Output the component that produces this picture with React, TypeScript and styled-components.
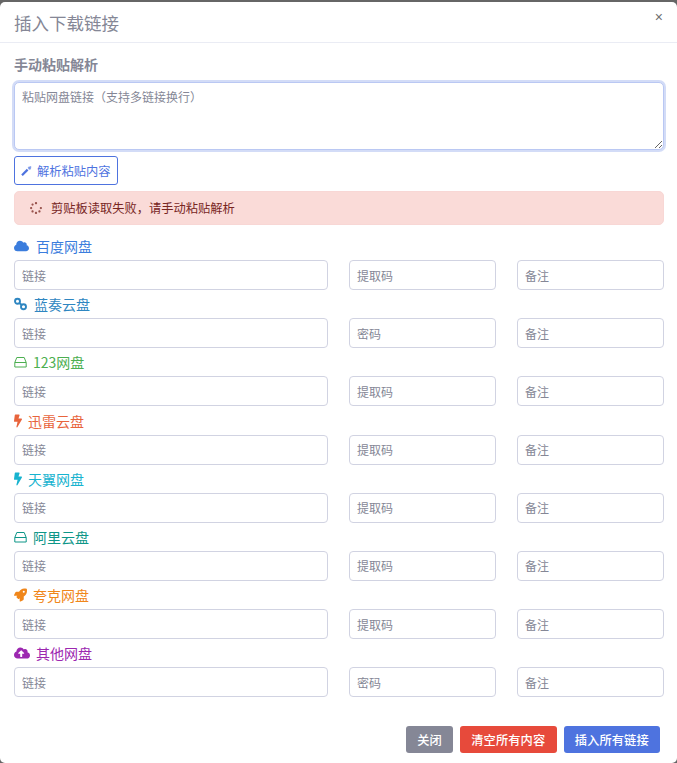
import React from "react";
import styled, { createGlobalStyle } from "styled-components";
import {
  FaBolt,
  FaCloud,
  FaCloudUploadAlt,
  FaRocket,
  FaSpinner,
} from "react-icons/fa";

const FONT = `"Noto Sans CJK SC", "Noto Sans", "Liberation Sans", sans-serif`;

const GlobalStyle = createGlobalStyle`
  html, body {
    margin: 0;
    padding: 0;
    background: #666;
  }
  * {
    box-sizing: border-box;
  }
`;

const Modal = styled.div`
  margin-top: 2px;
  width: 677px;
  height: 761px;
  background: #fff;
  border-radius: 5px;
  font-family: ${FONT};
  display: flex;
  flex-direction: column;
`;

const Header = styled.div`
  height: 41px;
  padding: 0 14px;
  border-bottom: 1px solid #eaecf4;
  display: flex;
  align-items: center;
  justify-content: space-between;
`;

const Title = styled.h5`
  margin: 0;
  font-size: 17.5px;
  font-weight: 400;
  color: #858796;
  line-height: 41px;
`;

const CloseButton = styled.button`
  border: 0;
  background: none;
  padding: 0;
  margin: -10px 0 0 0;
  font-family: "Liberation Sans", sans-serif;
  font-size: 14px;
  font-weight: 400;
  line-height: 1;
  color: #6f6f6f;
`;

const Body = styled.div`
  padding: 11px 13px 0 14px;
  flex: 1;
`;

const SectionLabel = styled.div`
  font-size: 14px;
  line-height: 20px;
  font-weight: 700;
  color: #858796;
  margin-bottom: 8px;
`;

const PasteArea = styled.textarea`
  display: block;
  width: 100%;
  height: 68px;
  margin: 0;
  padding: 5px 7px;
  border: 1px solid #bac8f3;
  border-radius: 5px;
  box-shadow: 0 0 0 2px rgba(78, 115, 223, 0.25);
  outline: none;
  resize: vertical;
  font-family: ${FONT};
  font-size: 12px;
  line-height: 18px;
  color: #6e707e;

  &::placeholder {
    color: #858796;
    opacity: 1;
  }
`;

const ParseButton = styled.button`
  display: flex;
  align-items: center;
  gap: 5px;
  height: 29px;
  width: 104px;
  margin: 6px 0;
  padding: 0 6px;
  border: 1px solid #4e73df;
  border-radius: 3px;
  background: #fff;
  color: #4e73df;
  font-family: ${FONT};
  font-size: 12.25px;
  white-space: nowrap;
`;

const Alert = styled.div`
  height: 34px;
  border-radius: 5px;
  border: 1px solid #f8d7d5;
  background: #fadbd8;
  color: #78261f;
  font-size: 12.25px;
  padding: 0 15px;
  display: flex;
  align-items: center;
  gap: 9px;
  margin-bottom: 11px;
`;

const Spinner = styled(FaSpinner)`
  font-size: 12px;
  opacity: 0.75;
`;

const DiskGroup = styled.div`
  height: 58.2px;
`;

const DiskLabel = styled.div<{ $color: string }>`
  height: 20px;
  display: flex;
  align-items: center;
  color: ${(props) => props.$color};
  font-size: 14px;
  line-height: 20px;
  white-space: nowrap;
`;

const IconSlot = styled.span<{ $width: number; $gap: number }>`
  display: flex;
  align-items: center;
  flex: none;
  height: 14px;
  width: ${(props) => props.$width}px;
  margin-right: ${(props) => props.$gap}px;

  svg {
    display: block;
    width: 100%;
    height: 100%;
  }
`;

const FieldRow = styled.div`
  display: grid;
  grid-template-columns: 314px 147px 147px;
  justify-content: space-between;
  margin-top: 4px;
`;

const Field = styled.input`
  height: 30px;
  width: 100%;
  padding: 0 7px;
  border: 1px solid #d1d3e2;
  border-radius: 4px;
  outline: none;
  background: #fff;
  font-family: ${FONT};
  font-size: 12px;
  color: #6e707e;

  &::placeholder {
    color: #858796;
    opacity: 1;
  }
`;

const Footer = styled.div`
  display: flex;
  justify-content: flex-end;
  gap: 7px;
  padding: 0 17px 10px 0;
`;

const FooterButton = styled.button<{ $bg: string }>`
  height: 27px;
  padding: 0 11.2px;
  border: 0;
  border-radius: 3px;
  background: ${(props) => props.$bg};
  color: #fff;
  font-family: ${FONT};
  font-size: 12.25px;
  font-weight: 500;
  letter-spacing: 0.1px;
  white-space: nowrap;
`;

const WandIcon = () => (
  <svg width="11" height="10" viewBox="0 0 11 10" fill="none" stroke="currentColor">
    <path d="M1 9.2 L6.6 3.6" strokeWidth="2.2" />
    <path d="M7.2 1.2 L10 0.6 L9.4 3.2 L7.8 3.2 Z" fill="currentColor" strokeWidth="0.6" opacity="0.75" />
  </svg>
);

const ChainIcon = () => (
  <svg viewBox="0 0 13 14" fill="none" stroke="currentColor" strokeWidth="1.9">
    <circle cx="3.5" cy="4.2" r="2.5" />
    <circle cx="9.5" cy="9.8" r="2.5" />
    <path d="M5 5.7 L8 8.3" />
  </svg>
);

const DriveIcon = () => (
  <svg viewBox="0 0 13 14" fill="none" stroke="currentColor" strokeWidth="1">
    <path d="M0.8 7.5 L2.8 2.5 H10.2 L12.2 7.5 V12 H0.8 Z M0.8 7.5 H12.2" strokeLinejoin="round" />
  </svg>
);

const disks = [
  { name: "百度网盘", color: "#3b7ddd", icon: <FaCloud />, code: "提取码", width: 15, gap: 7 },
  { name: "蓝奏云盘", color: "#2e86c1", icon: <ChainIcon />, code: "密码", width: 13, gap: 7 },
  { name: "123网盘", color: "#4caf50", icon: <DriveIcon />, code: "提取码", width: 13, gap: 6 },
  { name: "迅雷云盘", color: "#e8643c", icon: <FaBolt />, code: "提取码", width: 8, gap: 6 },
  { name: "天翼网盘", color: "#17b3cf", icon: <FaBolt />, code: "提取码", width: 8, gap: 6 },
  { name: "阿里云盘", color: "#0e9688", icon: <DriveIcon />, code: "提取码", width: 13, gap: 6 },
  { name: "夸克网盘", color: "#f0861a", icon: <FaRocket />, code: "提取码", width: 13, gap: 6 },
  { name: "其他网盘", color: "#9c27b0", icon: <FaCloudUploadAlt />, code: "密码", width: 16, gap: 6 },
];

const App: React.FC = () => {
  return (
    <>
      <GlobalStyle />
      <Modal>
        <Header>
          <Title>插入下载链接</Title>
          <CloseButton>×</CloseButton>
        </Header>
        <Body>
          <SectionLabel>手动粘贴解析</SectionLabel>
          <PasteArea placeholder="粘贴网盘链接（支持多链接换行）" />
          <ParseButton>
            <WandIcon />
            解析粘贴内容
          </ParseButton>
          <Alert>
            <Spinner />
            剪贴板读取失败，请手动粘贴解析
          </Alert>
          {disks.map((disk) => (
            <DiskGroup key={disk.name}>
              <DiskLabel $color={disk.color}>
                <IconSlot $width={disk.width} $gap={disk.gap}>
                  {disk.icon}
                </IconSlot>
                {disk.name}
              </DiskLabel>
              <FieldRow>
                <Field placeholder="链接" />
                <Field placeholder={disk.code} />
                <Field placeholder="备注" />
              </FieldRow>
            </DiskGroup>
          ))}
        </Body>
        <Footer>
          <FooterButton $bg="#858796">关闭</FooterButton>
          <FooterButton $bg="#e74a3b">清空所有内容</FooterButton>
          <FooterButton $bg="#4e73df">插入所有链接</FooterButton>
        </Footer>
      </Modal>
    </>
  );
};

export default App;
